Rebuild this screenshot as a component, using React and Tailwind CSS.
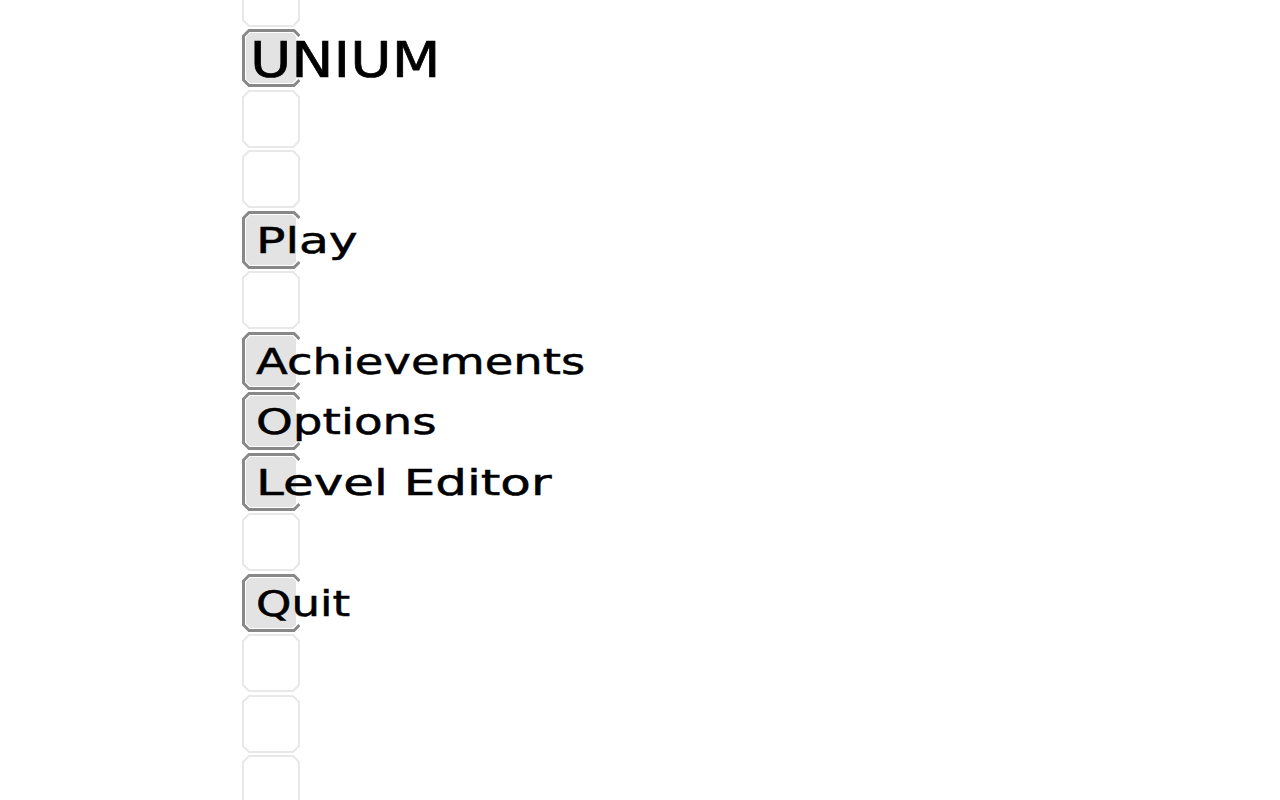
function Tile({ active }) {
  if (!active) {
    return (
      <svg width="58" height="58" viewBox="0 0 58 58" className="shrink-0 block">
        <path d="M7 1 H51 L57 7 V51 L51 57 H7 L1 51 V7 Z" fill="#ffffff" stroke="#e8e8e8" strokeWidth="2" />
      </svg>
    );
  }
  return (
    <svg width="58" height="58" viewBox="0 0 58 58" className="shrink-0 block">
      <path d="M8 4 H50 L54 7 V51 L50 54 H8 L4 50 V8 Z" fill="#e3e3e3" />
      <path d="M57.5 7 L52 1.5 H7 L1.5 7 V51 L7 56.5 H52 L57.5 51" fill="none" stroke="#888888" strokeWidth="3" />
    </svg>
  );
}

function Row({ active, children }) {
  return (
    <div className="flex items-center h-[58px]">
      <Tile active={active} />
      {children}
    </div>
  );
}

const labelBase =
  "-ml-[44px] translate-y-px text-[36px] leading-none text-black whitespace-nowrap origin-left [-webkit-text-stroke:0.5px_black] font-['DejaVu_Sans',sans-serif]";

export default function App() {
  return (
    <div className="h-[800px] w-[1280px] overflow-hidden bg-white">
      <div className="ml-[242px] -mt-[31.5px] flex flex-col gap-[2.5px]">
        <Row />
        <Row active>
          <span className="-ml-[50px] translate-y-[2px] text-[50px] leading-none text-black whitespace-nowrap origin-left scale-x-[1.13] [-webkit-text-stroke:0.7px_black] font-['DejaVu_Sans',sans-serif]">UNIUM</span>
        </Row>
        <Row />
        <Row />
        <Row active><span className={`${labelBase} scale-x-[1.355]`}>Play</span></Row>
        <Row />
        <Row active><span className={`${labelBase} scale-x-[1.29]`}>Achievements</span></Row>
        <Row active><span className={`${labelBase} scale-x-[1.3]`}>Options</span></Row>
        <Row active><span className={`${labelBase} scale-x-[1.387]`}>Level Editor</span></Row>
        <Row />
        <Row active><span className={`${labelBase} scale-x-[1.25]`}>Quit</span></Row>
        <Row />
        <Row />
        <Row />
      </div>
    </div>
  );
}
